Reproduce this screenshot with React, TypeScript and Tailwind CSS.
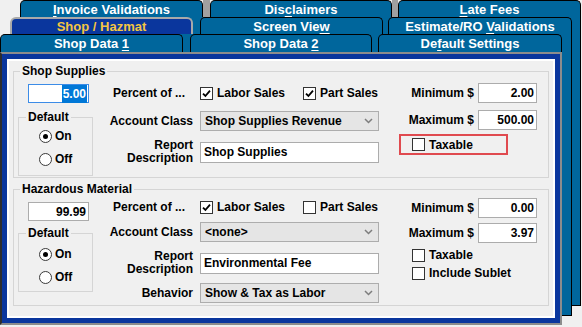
import React from 'react';

type Kids = { children?: React.ReactNode };

const U = ({ c }: { c: string }) => (
    <span className="underline decoration-1 underline-offset-[2px]">{c}</span>
);

function Tab({ children, className = '', selected = false }: Kids & { className?: string; selected?: boolean }) {
    const look = selected
        ? 'border-2 border-b-0 border-[#a9a9a9] rounded-t-[6px] bg-[#0a369d] text-[#f4c542]'
        : 'border border-b-0 border-black rounded-t-[5px] bg-[#00669c] text-white';
    return (
        <div className={`h-full flex items-center justify-center text-[13px] leading-none ${look} ${className}`}>
            <span className="whitespace-pre">{children}</span>
        </div>
    );
}

function Check({ checked = false }: { checked?: boolean }) {
    return (
        <span className="w-[13px] h-[13px] shrink-0 border border-[#333333] bg-white flex items-center justify-center">
            {checked && (
                <svg width="9" height="9" viewBox="0 0 9 9">
                    <path d="M1 4.6 L3.4 7 L8 1.6" stroke="#000" strokeWidth="1.8" fill="none" />
                </svg>
            )}
        </span>
    );
}

function CheckItem({ label, checked, className = '' }: { label: string; checked?: boolean; className?: string }) {
    return (
        <div className={`flex items-center gap-[4px] h-[16px] ${className}`}>
            <Check checked={checked} />
            <span>{label}</span>
        </div>
    );
}

function Radio({ label, on = false, className = '' }: { label: string; on?: boolean; className?: string }) {
    return (
        <div className={`flex items-center gap-[3px] h-[16px] pl-[20px] ${className}`}>
            <span className="w-[13px] h-[13px] rounded-full border border-[#3a3a3a] bg-white flex items-center justify-center">
                {on && <span className="w-[5px] h-[5px] rounded-full bg-black" />}
            </span>
            <span>{label}</span>
        </div>
    );
}

function Select({ value }: { value: string }) {
    return (
        <div className="w-[179px] h-[20px] border border-[#adadad] bg-[#e5e5e5] flex items-center pl-[4px] pr-[5px]">
            <span className="flex-1">{value}</span>
            <svg width="9" height="6" viewBox="0 0 9 6">
                <path d="M1 1 L4.5 4.5 L8 1" stroke="#7d7d7d" strokeWidth="1.5" fill="none" />
            </svg>
        </div>
    );
}

function TextBox({ value }: { value: string }) {
    return (
        <div className="w-[179px] h-[21px] border border-[#acacac] bg-white flex items-center pl-[3px]">{value}</div>
    );
}

function NumBox({ value }: { value: string }) {
    return (
        <div className="w-[59px] h-[20px] border border-[#acacac] bg-white flex items-center justify-end pr-[2px]">
            {value}
        </div>
    );
}

function Row({ label, children, className = '' }: Kids & { label: React.ReactNode; className?: string }) {
    return (
        <div className={`flex items-center ${className}`}>
            <div className="w-[93px] text-right leading-[13px]">{label}</div>
            <div className="ml-[7px]">{children}</div>
        </div>
    );
}

function MoneyRow({ label, value, className = '' }: { label: string; value: string; className?: string }) {
    return (
        <div className={`flex items-center ${className}`}>
            <div className="w-[94px] text-right">{label}</div>
            <div className="ml-[4px]">
                <NumBox value={value} />
            </div>
        </div>
    );
}

function DefaultBox({ className = '', firstRow = '' }: { className?: string; firstRow?: string }) {
    return (
        <fieldset className={`ml-[4px] w-[75px] h-[66px] border border-[#d5d5d5] ${className}`}>
            <legend className="ml-[7px] px-[2px] leading-[14px]">Default</legend>
            <Radio label="On" on className={firstRow} />
            <Radio label="Off" className="mt-[7px]" />
        </fieldset>
    );
}

function ShopSupplies() {
    return (
        <fieldset className="w-[536px] h-[114px] border border-[#d5d5d5]">
            <legend className="ml-[6px] px-[2px] leading-[14px]">Shop Supplies</legend>
            <div className="flex">
                <div className="w-[79px]">
                    <div className="ml-[14px] mt-[6px] w-[61px] h-[19px] border border-[#3c8ce7] bg-white flex items-center justify-end pr-[1px]">
                        <span className="bg-[#0078d7] text-white px-[1px]">5.00</span>
                    </div>
                    <DefaultBox className="mt-[7px]" firstRow="mt-[4px]" />
                </div>

                <div className="ml-[7px] flex flex-col">
                    <div className="flex items-center h-[16px] mt-[7px]">
                        <div className="w-[100px] pl-[13px]">Percent of ...</div>
                        <CheckItem label="Labor Sales" checked className="w-[103px]" />
                        <CheckItem label="Part Sales" checked />
                    </div>
                    <Row label="Account Class" className="mt-[10px]">
                        <Select value="Shop Supplies Revenue" />
                    </Row>
                    <Row label={<>Report<br />Description</>} className="mt-[8px]">
                        <TextBox value="Shop Supplies" />
                    </Row>
                </div>

                <div className="ml-[1px] flex flex-col">
                    <MoneyRow label="Minimum $" value="2.00" className="mt-[5px]" />
                    <MoneyRow label="Maximum $" value="500.00" className="mt-[7px]" />
                    <div className="ml-[19px] mt-[4px] w-[109px] h-[21px] border-2 border-[#e04a4f] flex items-center pl-[11px]">
                        <CheckItem label="Taxable" />
                    </div>
                </div>
            </div>
        </fieldset>
    );
}

function Hazmat() {
    return (
        <fieldset className="mt-[4px] w-[536px] h-[124px] border border-[#d5d5d5]">
            <legend className="ml-[6px] px-[2px] leading-[14px]">Hazardous Material</legend>
            <div className="flex">
                <div className="w-[79px]">
                    <div className="ml-[14px] mt-[6px] w-[61px] h-[19px] border border-[#acacac] bg-white flex items-center justify-end pr-[2px]">
                        99.99
                    </div>
                    <DefaultBox className="mt-[5px]" firstRow="mt-[6px]" />
                </div>

                <div className="ml-[7px] flex flex-col">
                    <div className="flex items-center h-[16px] mt-[3px]">
                        <div className="w-[100px] pl-[13px]">Percent of ...</div>
                        <CheckItem label="Labor Sales" checked className="w-[103px]" />
                        <CheckItem label="Part Sales" />
                    </div>
                    <Row label="Account Class" className="mt-[7px]">
                        <Select value="<none>" />
                    </Row>
                    <Row label={<>Report<br />Description</>} className="mt-[8px]">
                        <TextBox value="Environmental Fee" />
                    </Row>
                    <Row label="Behavior" className="mt-[7px]">
                        <Select value="Show & Tax as Labor" />
                    </Row>
                </div>

                <div className="ml-[1px] flex flex-col">
                    <MoneyRow label="Minimum $" value="0.00" className="mt-[2px]" />
                    <MoneyRow label="Maximum $" value="3.97" className="mt-[5px]" />
                    <CheckItem label="Taxable" className="pl-[32px] mt-[4px]" />
                    <CheckItem label="Include Sublet" className="pl-[32px] mt-[2px]" />
                </div>
            </div>
        </fieldset>
    );
}

export default function App() {
    return (
        <div className="w-[582px] h-[327px] bg-[#f0f0f0] grid overflow-hidden font-['Liberation_Sans',Arial,sans-serif] text-[12px] font-bold text-black">
            {/* back row of tabs */}
            <div className="col-start-1 row-start-1 ml-[20px] w-[561px] h-[306px] flex flex-col">
                <div className="flex h-[17px]">
                    <Tab className="w-[183px]"><U c="I" />nvoice Validations</Tab>
                    <div className="w-[7px] bg-[#a0a0a0]" />
                    <Tab className="w-[182px]">Dis<U c="c" />laimers</Tab>
                    <div className="w-[6px] bg-[#a0a0a0]" />
                    <Tab className="flex-1"><U c="L" />ate Fees</Tab>
                </div>
                <div className="flex-1 bg-[#00669c] border-x border-b border-black" />
            </div>

            {/* middle row of tabs */}
            <div className="col-start-1 row-start-1 ml-[10px] mt-[17px] w-[562px] h-[299px] flex flex-col">
                <div className="flex h-[17px]">
                    <Tab selected className="w-[183px]">Shop / Hazmat</Tab>
                    <div className="w-[7px]" />
                    <Tab className="w-[183px]">Screen Vie<U c="w" /></Tab>
                    <div className="w-[5px]" />
                    <Tab className="flex-1">{'Estimate/RO '}<U c="V" />alidations</Tab>
                </div>
                <div className="flex-1 bg-[#00669c] border-x border-b border-black" />
            </div>

            {/* front row and page */}
            <div className="col-start-1 row-start-1 mt-[34px] w-[562px] h-[291px] flex flex-col">
                <div className="flex h-[18px]">
                    <Tab className="w-[183px]">{'Shop Data '}<U c="1" /></Tab>
                    <div className="w-[7px]" />
                    <Tab className="w-[182px]">{'Shop Data '}<U c="2" /></Tab>
                    <div className="w-[6px]" />
                    <Tab className="flex-1">De<U c="f" />ault Settings</Tab>
                </div>
                <div className="flex-1 border-2 border-[#8c8c8c] border-l-[#2e2e2e] bg-[#0a369d] p-[5px]">
                    <div className="h-full border-2 border-white bg-[#f0f0f0] pl-[4px] pt-[3px]">
                        <ShopSupplies />
                        <Hazmat />
                    </div>
                </div>
            </div>
        </div>
    );
}
